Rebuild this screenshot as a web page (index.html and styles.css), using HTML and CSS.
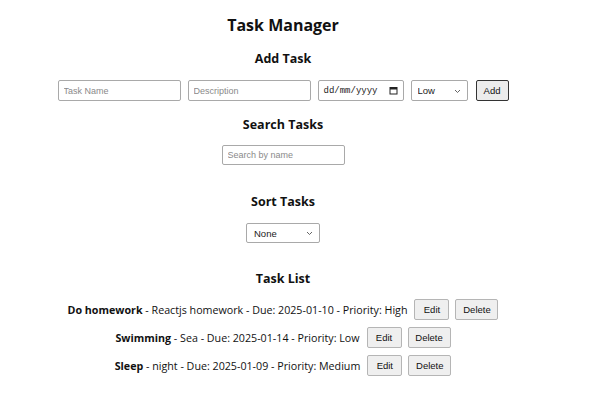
FILE: index.html
```html
<!DOCTYPE html>
<html>
<head>
<meta charset="utf-8">
<link rel="stylesheet" href="styles.css">
</head>
<body>
<div class="app">
  <h1 class="title">Task Manager</h1>
  <h2 class="section section-add">Add Task</h2>
  <div class="add-row">
    <input class="field text-field" type="text" placeholder="Task Name">
    <input class="field text-field" type="text" placeholder="Description">
    <div class="field date-field"><span class="date-text">dd/mm/yyyy</span><svg class="cal" width="9" height="9" viewBox="0 0 9 9"><rect x="1" y="1.5" width="7" height="6.5" fill="none" stroke="#222" stroke-width="1"/><rect x="1" y="1.5" width="7" height="2" fill="#222"/></svg></div>
    <div class="select-wrap prio-wrap">
      <select class="field prio-select"><option>Low</option><option>Medium</option><option>High</option></select>
      <svg class="chev" width="7" height="5" viewBox="0 0 7 5"><path d="M1 1 L3.5 3.5 L6 1" fill="none" stroke="#555" stroke-width="0.9"/></svg>
    </div>
    <button class="btn add-btn">Add</button>
  </div>
  <h2 class="section section-search">Search Tasks</h2>
  <input class="field search-field" type="text" placeholder="Search by name">
  <h2 class="section section-sort">Sort Tasks</h2>
  <div class="select-wrap sort-wrap">
    <select class="field sort-select"><option>None</option><option>Due date</option><option>Priority</option></select>
    <svg class="chev" width="7" height="5" viewBox="0 0 7 5"><path d="M1 1 L3.5 3.5 L6 1" fill="none" stroke="#555" stroke-width="0.9"/></svg>
  </div>
  <h2 class="section section-list">Task List</h2>
  <ul class="task-list">
    <li class="task"><span class="task-text"><b>Do homework</b> - Reactjs homework - Due: 2025-01-10 - Priority: High</span><button class="btn edit-btn">Edit</button><button class="btn del-btn">Delete</button></li>
    <li class="task"><span class="task-text"><b>Swimming</b> - Sea - Due: 2025-01-14 - Priority: Low</span><button class="btn edit-btn">Edit</button><button class="btn del-btn">Delete</button></li>
    <li class="task"><span class="task-text"><b>Sleep</b> - night - Due: 2025-01-09 - Priority: Medium</span><button class="btn edit-btn">Edit</button><button class="btn del-btn">Delete</button></li>
  </ul>
</div>
</body>
</html>
```
FILE: styles.css
```css
html, body {
  margin: 0;
  padding: 0;
  background: #ffffff;
}
body {
  font-family: "Open Sans", "Noto Sans", sans-serif;
  color: #111;
}
.app {
  width: 566px;
  display: flex;
  flex-direction: column;
  align-items: center;
  padding-top: 13px;
}
.title {
  margin: 0;
  font-size: 16px;
  line-height: 24px;
  font-weight: 700;
}
.section {
  margin: 0;
  font-size: 12.5px;
  line-height: 18px;
  font-weight: 700;
}
.section-add { margin-top: 13px; }
.section-search { margin-top: 15px; }
.section-sort { margin-top: 28px; }
.section-list { margin-top: 27px; }
.add-row {
  display: flex;
  gap: 7px;
  align-items: center;
  margin-top: 12px;
}
.field {
  box-sizing: border-box;
  font-family: "Liberation Sans", Arial, sans-serif;
  font-size: 9px;
  border: 1px solid #a9a9a9;
  border-radius: 2px;
  background: #fff;
  color: #222;
  margin: 0;
}
.text-field {
  width: 123px;
  height: 21px;
  padding: 0 5px;
}
.text-field::placeholder, .search-field::placeholder { color: #8a8a8a; }
.date-field {
  width: 86px;
  height: 21px;
  padding: 0 5px 0 5px;
  display: flex;
  align-items: center;
  justify-content: space-between;
  font-family: "Liberation Mono", monospace;
  font-size: 9px;
  color: #222;
}
.cal { display: block; }
.select-wrap {
  position: relative;
  display: flex;
}
.select-wrap select {
  appearance: none;
  -webkit-appearance: none;
}
.chev {
  position: absolute;
  top: 50%;
  right: 7px;
  margin-top: -2px;
  pointer-events: none;
}
.prio-select {
  width: 57px;
  height: 21px;
  padding: 0 6px;
  font-size: 9.5px;
}
.btn {
  box-sizing: border-box;
  font-family: "Liberation Sans", Arial, sans-serif;
  font-size: 9.5px;
  color: #111;
  background: #efefef;
  border: 1px solid #b5b5b5;
  border-radius: 2px;
  height: 21px;
  padding: 0 6px;
  margin: 0;
}
.add-btn {
  width: 33px;
  height: 21px;
  border: 1.5px solid #333;
  background: #ececec;
  margin-left: 1px;
}
.search-field {
  margin-top: 11px;
  width: 123px;
  height: 20px;
  padding: 0 5px;
}
.sort-wrap { margin-top: 12px; }
.sort-select {
  width: 74px;
  height: 20px;
  padding: 0 7px;
  font-size: 9.5px;
}
.task-list {
  list-style: none;
  margin: 11px 0 0;
  padding: 0;
  display: flex;
  flex-direction: column;
  align-items: center;
  gap: 7px;
}
.task {
  display: flex;
  align-items: center;
  gap: 6px;
  font-size: 10.7px;
}
.task-text { margin-right: 1px; }
.edit-btn { width: 35px; }
.del-btn { width: 43px; }
```
